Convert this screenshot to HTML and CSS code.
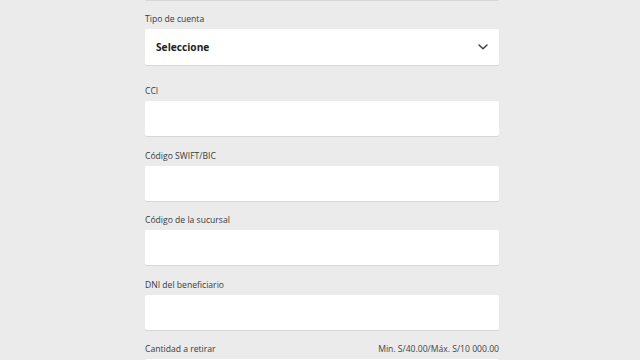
FILE: index.html
```html
<!DOCTYPE html>
<html lang="es">
<head>
    <meta charset="UTF-8">
    <meta name="viewport" content="width=device-width, initial-scale=1.0">
    <title>Retirar</title>
    <link rel="stylesheet" href="styles.css">
</head>
<body>

<div class="form">
    <div class="field">
        <div class="box"></div>
    </div>

    <div class="field field-select">
        <label class="label" for="tipoCuenta">Tipo de cuenta</label>
        <div class="box select" id="tipoCuenta">
            <span class="select-text">Seleccione</span>
            <svg class="chevron" width="12" height="8" viewBox="0 0 12 8">
                <path d="M2 2 L6 5.8 L10 2" fill="none" stroke="#3a3a3a" stroke-width="1.4" stroke-linecap="round" stroke-linejoin="round"/>
            </svg>
        </div>
    </div>

    <div class="field">
        <label class="label" for="cci">CCI</label>
        <input class="box" type="text" id="cci">
    </div>

    <div class="field">
        <label class="label" for="swift">Código SWIFT/BIC</label>
        <input class="box" type="text" id="swift">
    </div>

    <div class="field">
        <label class="label" for="sucursal">Código de la sucursal</label>
        <input class="box" type="text" id="sucursal">
    </div>

    <div class="field">
        <label class="label" for="dni">DNI del beneficiario</label>
        <input class="box" type="text" id="dni">
    </div>

    <div class="field">
        <div class="label-row">
            <label class="label" for="cantidad">Cantidad a retirar</label>
            <span class="label limits">Min. S/40.00/Máx. S/10 000.00</span>
        </div>
        <input class="box" type="text" id="cantidad">
    </div>
</div>

</body>
</html>
```

FILE: styles.css
```css
body {
    background-color: #ebebeb;
    color: #333333;
    font-family: "Open Sans", "Noto Sans", Arial, sans-serif;
    margin: 0;
    padding: 0;
    overflow: hidden;
}

.form {
    width: 354px;
    margin-left: 145px;
    margin-top: -35px;
    display: flex;
    flex-direction: column;
}

.field {
    display: flex;
    flex-direction: column;
    margin-bottom: 12.4px;
}

.field-select {
    margin-bottom: 19px;
}

.label {
    display: block;
    font-size: 8.6px;
    line-height: 14px;
    color: #3a3a3a;
    margin-bottom: 3px;
}

.label-row {
    display: flex;
    justify-content: space-between;
}

.limits {
    color: #444444;
}

.box {
    box-sizing: border-box;
    height: 35px;
    width: 100%;
    background-color: #ffffff;
    border: none;
    border-radius: 2px;
    box-shadow: 0 1px 0 #d6d6d6;
    outline: none;
    padding: 0 11px;
    font-family: inherit;
}

.select {
    height: 36px;
    display: flex;
    align-items: center;
    justify-content: space-between;
}

.select-text {
    font-size: 10.2px;
    font-weight: 700;
    color: #222222;
}

.chevron {
    margin-right: -1px;
}
```
